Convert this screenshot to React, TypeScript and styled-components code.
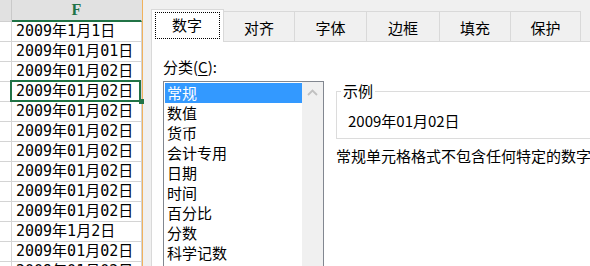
import React from 'react'
import styled, { createGlobalStyle } from 'styled-components'

const GlobalStyle = createGlobalStyle`
  html, body {
    margin: 0;
    padding: 0;
    background: #fff;
    overflow: hidden;
  }
`

const Layout = styled.div`
  display: flex;
  width: 590px;
  height: 266px;
  overflow: hidden;
`

/* ---------- spreadsheet ---------- */

const Sheet = styled.div`
  width: 142px;
  flex-shrink: 0;
  border-right: 1px solid #f1b25c;
  background: #fff;
`

const HeaderRow = styled.div`
  display: flex;
  height: 22px;
  background: #e1e1e1;
`

const HeaderCell = styled.div<{ $w: number; $active?: boolean }>`
  box-sizing: border-box;
  width: ${p => p.$w}px;
  height: 22px;
  border-right: 1px solid ${p => (p.$active ? '#e1e1e1' : '#c9c9c9')};
  border-bottom: ${p => (p.$active ? '2px solid #217346' : '1px solid #cfcfcf')};
  display: flex;
  align-items: center;
  justify-content: center;
  font-family: 'Liberation Serif', serif;
  font-weight: bold;
  font-size: 16px;
  color: #217346;
  padding-bottom: 1px;
`

const Row = styled.div`
  display: flex;
  height: 20px;
  box-sizing: border-box;
  border-bottom: 1px solid #d4d4d4;
`

const Cell = styled.div<{ $w: number; $selected?: boolean }>`
  position: relative;
  box-sizing: border-box;
  width: ${p => p.$w}px;
  height: 19px;
  border-right: 1px solid #d4d4d4;
  padding-left: 4px;
  font-family: 'DejaVu Sans Mono', 'Noto Sans CJK SC', monospace;
  font-size: 15px;
  line-height: 19px;
  color: #000;
  white-space: nowrap;

  ${p =>
    p.$selected &&
    `
    &::after {
      content: '';
      position: absolute;
      top: -2px;
      left: -2px;
      right: 0;
      bottom: -1px;
      border: 2px solid #217346;
    }
    &::before {
      content: '';
      position: absolute;
      right: -3px;
      bottom: -3px;
      width: 5px;
      height: 5px;
      background: #217346;
      z-index: 1;
    }
  `}
`

/* ---------- format dialog ---------- */

const Dialog = styled.div`
  flex: 1;
  min-width: 0;
  display: flex;
  flex-direction: column;
  background: #f0f0f0;
  padding: 9px 0 0 8px;
  font-family: 'Noto Sans CJK SC', 'Noto Sans', sans-serif;
  font-size: 15px;
  color: #000;
`

const TabStrip = styled.div`
  display: flex;
  align-items: flex-end;
  height: 32px;
`

const Tab = styled.div<{ $w: number; $active?: boolean }>`
  box-sizing: border-box;
  width: ${p => p.$w}px;
  height: ${p => (p.$active ? 33 : 30)}px;
  margin-bottom: ${p => (p.$active ? -1 : 0)}px;
  position: relative;
  z-index: ${p => (p.$active ? 1 : 0)};
  background: ${p => (p.$active ? '#fff' : '#f0f0f0')};
  border: 1px solid #d9d9d9;
  border-left: ${p => (p.$active ? '1px solid #d9d9d9' : 'none')};
  border-bottom: none;
  display: flex;
  align-items: center;
  justify-content: center;
  line-height: 20px;
  padding-top: ${p => (p.$active ? 0 : 2)}px;
`

const FocusRing = styled.span`
  box-sizing: border-box;
  width: 65px;
  height: 27px;
  margin: 0 1px 2px 0;
  border: 1px dotted #000;
  display: flex;
  align-items: center;
  justify-content: center;
`

const Panel = styled.div`
  flex: 1;
  background: #fff;
  border-top: 1px solid #d9d9d9;
  border-left: 1px solid #d9d9d9;
  padding: 15px 0 0 11px;
  overflow: hidden;
`

const FieldLabel = styled.div`
  line-height: 20px;
  height: 20px;

  u {
    text-decoration: underline;
    text-underline-offset: 2px;
  }
`

const Body = styled.div`
  display: flex;
  gap: 12px;
  margin-top: 4px;
`

const ListBox = styled.div`
  box-sizing: border-box;
  width: 161px;
  height: 200px;
  flex-shrink: 0;
  border: 1px solid #828790;
  display: flex;
`

const Items = styled.div`
  flex: 1;
  padding: 1px 0 0 1px;
`

const Item = styled.div<{ $selected?: boolean }>`
  height: 20px;
  line-height: 20px;
  padding-left: 2px;
  background: ${p => (p.$selected ? '#3399ff' : 'transparent')};
  color: ${p => (p.$selected ? '#fff' : '#000')};
  white-space: nowrap;
`

const ScrollTrack = styled.div`
  width: 21px;
  background: #f0f0f0;
  display: flex;
  flex-direction: column;
  align-items: center;
`

const RightColumn = styled.div`
  flex: 1;
  min-width: 0;
`

const Group = styled.fieldset`
  margin: 0;
  width: calc(100% + 40px);
  box-sizing: border-box;
  border: 1px solid #dcdcdc;
  padding: 0 0 7px 4px;
`

const Legend = styled.legend`
  padding: 0 2px;
  line-height: 20px;
`

const Sample = styled.div`
  padding: 10px 0 0 7px;
  line-height: 20px;
`

const Description = styled.div`
  margin-top: 7px;
  line-height: 20px;
  white-space: nowrap;
`

const dates = [
  '2009年1月1日',
  '2009年01月01日',
  '2009年01月02日',
  '2009年01月02日',
  '2009年01月02日',
  '2009年01月02日',
  '2009年01月02日',
  '2009年01月02日',
  '2009年01月02日',
  '2009年01月02日',
  '2009年1月2日',
  '2009年01月02日',
  '2009年01月02日',
]

const tabs = [
  { label: '数字', w: 73 },
  { label: '对齐', w: 71 },
  { label: '字体', w: 72 },
  { label: '边框', w: 73 },
  { label: '填充', w: 71 },
  { label: '保护', w: 70 },
]

const categories = ['常规', '数值', '货币', '会计专用', '日期', '时间', '百分比', '分数', '科学记数']

const UpArrow = () => (
  <svg width="21" height="17" viewBox="0 0 21 17">
    <polyline points="6,13 10.5,8.5 15,13" fill="none" stroke="#c1c1c1" strokeWidth="1.8" />
  </svg>
)

export default function App() {
  return (
    <>
      <GlobalStyle />
      <Layout>
        <Sheet>
          <HeaderRow>
            <HeaderCell $w={12} />
            <HeaderCell $w={130} $active>
              F
            </HeaderCell>
          </HeaderRow>
          {dates.map((d, i) => (
            <Row key={i}>
              <Cell $w={12} />
              <Cell $w={130} $selected={i === 3}>
                {d}
              </Cell>
            </Row>
          ))}
        </Sheet>

        <Dialog>
          <TabStrip>
            {tabs.map((t, i) => (
              <Tab key={t.label} $w={t.w} $active={i === 0}>
                {i === 0 ? <FocusRing>{t.label}</FocusRing> : t.label}
              </Tab>
            ))}
          </TabStrip>
          <Panel>
            <FieldLabel>
              分类(<u>C</u>):
            </FieldLabel>
            <Body>
              <ListBox>
                <Items>
                  {categories.map((c, i) => (
                    <Item key={c} $selected={i === 0}>
                      {c}
                    </Item>
                  ))}
                </Items>
                <ScrollTrack>
                  <UpArrow />
                </ScrollTrack>
              </ListBox>
              <RightColumn>
                <Group>
                  <Legend>示例</Legend>
                  <Sample>2009年01月02日</Sample>
                </Group>
                <Description>常规单元格格式不包含任何特定的数字格式。</Description>
              </RightColumn>
            </Body>
          </Panel>
        </Dialog>
      </Layout>
    </>
  )
}
